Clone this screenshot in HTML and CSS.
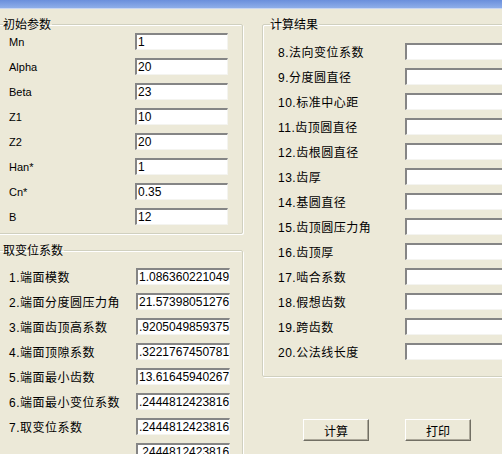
FILE: index.html
```html
<!DOCTYPE html>
<html lang="zh">
<head>
<meta charset="utf-8">
<link rel="stylesheet" href="styles.css">
</head>
<body>
<div class="window">
  <div class="titlebar"></div>
  <div class="client">
    <div class="col-left">
      <fieldset class="group g-init">
        <legend>初始参数</legend>
        <div class="rows">
          <div class="row"><span class="lbl lat">Mn</span><div class="tb">1</div></div>
          <div class="row"><span class="lbl lat">Alpha</span><div class="tb">20</div></div>
          <div class="row"><span class="lbl lat">Beta</span><div class="tb">23</div></div>
          <div class="row"><span class="lbl lat">Z1</span><div class="tb">10</div></div>
          <div class="row"><span class="lbl lat">Z2</span><div class="tb">20</div></div>
          <div class="row"><span class="lbl lat">Han*</span><div class="tb">1</div></div>
          <div class="row"><span class="lbl lat">Cn*</span><div class="tb">0.35</div></div>
          <div class="row"><span class="lbl lat">B</span><div class="tb">12</div></div>
        </div>
      </fieldset>
      <fieldset class="group g-shift">
        <legend>取变位系数</legend>
        <div class="rows">
          <div class="row"><span class="lbl">1.端面模数</span><div class="tb">1.08636022104975</div></div>
          <div class="row"><span class="lbl">2.端面分度圆压力角</span><div class="tb">21.5739805127631</div></div>
          <div class="row"><span class="lbl">3.端面齿顶高系数</span><div class="tb">.920504985937582</div></div>
          <div class="row"><span class="lbl">4.端面顶隙系数</span><div class="tb">.322176745078154</div></div>
          <div class="row"><span class="lbl">5.端面最小齿数</span><div class="tb">13.6164594026754</div></div>
          <div class="row"><span class="lbl">6.端面最小变位系数</span><div class="tb">.244481242381616</div></div>
          <div class="row"><span class="lbl">7.取变位系数</span><div class="tb">.244481242381616</div></div>
          <div class="row"><span class="lbl"></span><div class="tb">.244481242381616</div></div>
        </div>
      </fieldset>
    </div>
    <div class="col-right">
      <fieldset class="group g-result">
        <legend>计算结果</legend>
        <div class="rows">
          <div class="row"><span class="lbl">8.法向变位系数</span><div class="tb"></div></div>
          <div class="row"><span class="lbl">9.分度圆直径</span><div class="tb"></div></div>
          <div class="row"><span class="lbl">10.标准中心距</span><div class="tb"></div></div>
          <div class="row"><span class="lbl">11.齿顶圆直径</span><div class="tb"></div></div>
          <div class="row"><span class="lbl">12.齿根圆直径</span><div class="tb"></div></div>
          <div class="row"><span class="lbl">13.齿厚</span><div class="tb"></div></div>
          <div class="row"><span class="lbl">14.基圆直径</span><div class="tb"></div></div>
          <div class="row"><span class="lbl">15.齿顶圆压力角</span><div class="tb"></div></div>
          <div class="row"><span class="lbl">16.齿顶厚</span><div class="tb"></div></div>
          <div class="row"><span class="lbl">17.啮合系数</span><div class="tb"></div></div>
          <div class="row"><span class="lbl">18.假想齿数</span><div class="tb"></div></div>
          <div class="row"><span class="lbl">19.跨齿数</span><div class="tb"></div></div>
          <div class="row"><span class="lbl">20.公法线长度</span><div class="tb"></div></div>
        </div>
      </fieldset>
      <div class="buttons">
        <button class="btn">计算</button>
        <button class="btn">打印</button>
      </div>
    </div>
  </div>
</div>
</body>
</html>
```
FILE: styles.css
```css
html, body {
  margin: 0;
  padding: 0;
}
body {
  width: 502px;
  height: 454px;
  overflow: hidden;
  background: #ece9d8;
  font-family: "Liberation Sans", "Noto Sans CJK SC", sans-serif;
  font-size: 12px;
  color: #000;
}
.window {
  width: 502px;
  height: 454px;
  overflow: hidden;
}
.titlebar {
  height: 8px;
  background: linear-gradient(#6a8fdc, #8eaee9);
  border-bottom: 1px solid #c9d6f0;
}
.client {
  display: flex;
  width: 620px;
  padding-top: 8px;
}
.col-left {
  margin-left: -5px;
  width: 248px;
  flex: none;
}
.col-right {
  margin-left: 19px;
  flex: none;
  width: 340px;
}
.group {
  margin: 0;
  padding: 0;
  border: 1px solid #d0d0bf;
  box-shadow: inset 1px 1px 0 #fff, 1px 1px 0 #fff;
  border-radius: 2px;
}
.group legend {
  margin-left: 7px;
  padding: 0 1px 0 0;
  line-height: 14px;
  font-family: "Noto Sans CJK SC", sans-serif;
  font-size: 12px;
}
.row {
  display: flex;
  align-items: center;
  height: 17px;
  margin-bottom: 8px;
}
.row:last-child {
  margin-bottom: 0;
}
.lbl {
  flex: none;
  font-family: "Liberation Sans", "Noto Sans CJK SC", sans-serif;
  font-size: 12px;
  letter-spacing: 0.5px;
  white-space: nowrap;
}
.lbl.lat {
  font-size: 11px;
  letter-spacing: 0;
}
.tb {
  flex: none;
  box-sizing: border-box;
  height: 17px;
  background: #fff;
  border-top: 2px solid #858585;
  border-left: 2px solid #858585;
  border-bottom: 1px solid #f4f4f0;
  border-right: 1px solid #f4f4f0;
  padding: 0 0 0 1px;
  line-height: 14px;
  font-family: "Liberation Sans", sans-serif;
  font-size: 12px;
  white-space: nowrap;
  overflow: hidden;
}
.g-init .rows {
  padding: 2px 0 8px 13px;
}
.g-init .lbl {
  width: 126px;
}
.g-init .tb {
  width: 93px;
}
.g-shift {
  margin-top: 9px;
}
.g-shift .rows {
  padding: 11px 0 20px 13px;
}
.g-shift .lbl {
  width: 127px;
}
.g-shift .tb {
  width: 94px;
}
.g-result .rows {
  padding: 12px 0 16px 15px;
}
.g-result .lbl {
  width: 127px;
}
.g-result .tb {
  width: 130px;
}
.buttons {
  display: flex;
  gap: 36px;
  margin-top: 42px;
  padding-left: 41px;
}
.btn {
  width: 66px;
  height: 22px;
  margin: 0;
  padding: 0;
  background: #ece9d8;
  border: 1px solid;
  border-color: #fff #716f64 #716f64 #fff;
  box-shadow: inset -1px -1px 0 #aca899;
  font-family: "Noto Sans CJK SC", sans-serif;
  font-size: 12px;
  color: #000;
}
```
